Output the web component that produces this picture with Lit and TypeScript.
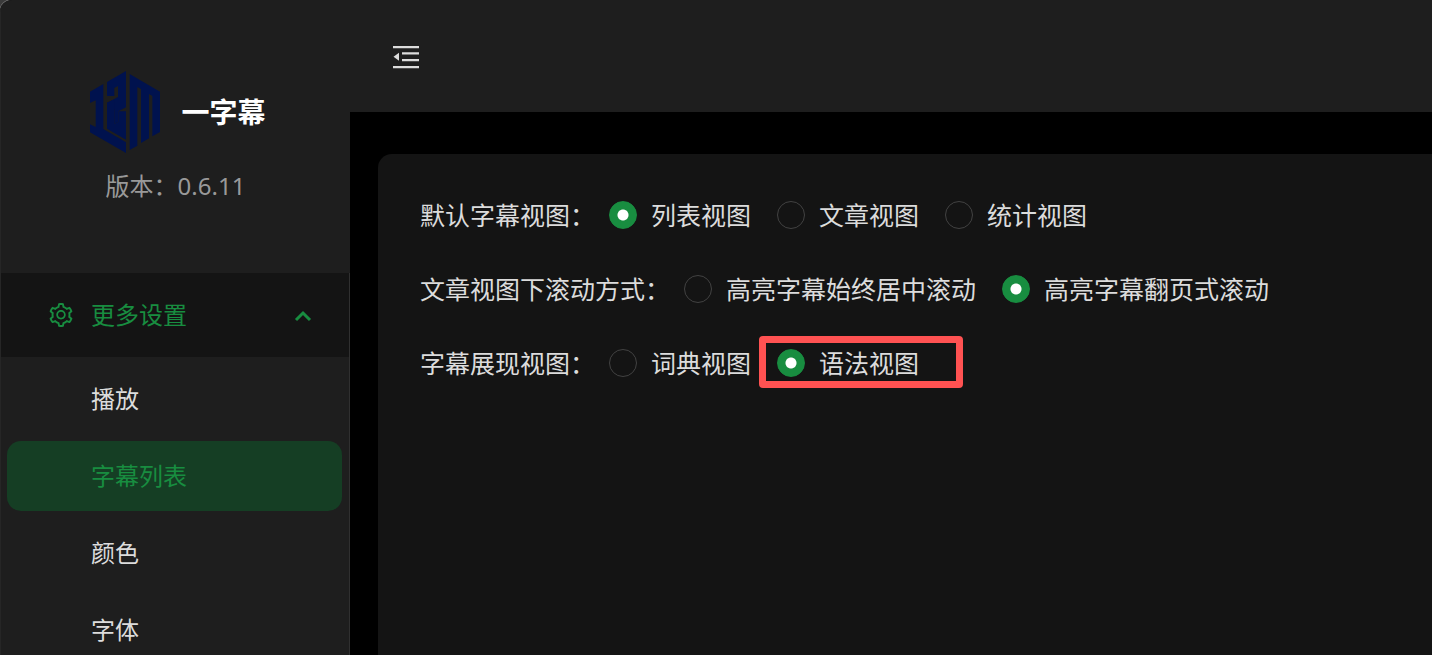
import { LitElement, html, css, svg } from "lit";
import { customElement, state } from "lit/decorators.js";

interface Group {
  name: string;
  label: string;
  options: string[];
}

const GROUPS: Group[] = [
  { name: "default-view", label: "默认字幕视图：", options: ["列表视图", "文章视图", "统计视图"] },
  { name: "scroll-mode", label: "文章视图下滚动方式：", options: ["高亮字幕始终居中滚动", "高亮字幕翻页式滚动"] },
  { name: "display-view", label: "字幕展现视图：", options: ["词典视图", "语法视图"] },
];

const MENU = ["播放", "字幕列表", "颜色", "字体"];
const HIGHLIGHTED = "语法视图";

const logo = svg`
  <path d="M0 62L40 39V174L108 214V246L0 184V160L17 168V88L0 96Z"/>
  <path d="M51 33L108 0V109L85 121V153L73 159V115L51 128V95L84 78V45L73 51V75H51Z"/>
  <path d="M51 95L73 86V159L85 153V121H108V206L51 173Z"/>
  <path d="M119 9L210 62V183L187 196V75L177 69V202L153 216V54L142 48V224L119 237Z"/>`;

@customElement("app-root")
export class AppRoot extends LitElement {
  static styles = css`
    :host {
      display: block;
      height: 100vh;
      overflow: hidden;
      background: #3a3a3a;
      color: #dcdcdc;
      font-family: "Noto Sans", "Noto Sans CJK SC", sans-serif;
      font-size: 25px;
      line-height: 38px;
    }
    * { box-sizing: border-box; }
    .window {
      display: grid;
      grid-template-columns: 350px 1fr;
      height: 100%;
      overflow: hidden;
      border-radius: 12px 0 0 0;
      background: #000;
      box-shadow: 0 0 0 1px #6a6a6a;
    }
    .sidebar { background: #1e1e1e; border-left: 1px solid #262626; overflow: hidden; }
    .brand {
      display: flex;
      flex-direction: column;
      align-items: center;
      height: 273px;
      padding-top: 71px;
      gap: 14px;
    }
    .brand-row { display: flex; align-items: center; gap: 21px; padding-left: 5px; }
    .logo { width: 70px; height: 82px; fill: #00124e; }
    .title { margin: 0; font-size: 28px; font-weight: 700; color: #fff; }
    .version { margin: 0; font-size: 24px; color: #999; }
    .menu { border-right: 1px solid #303030; min-height: 100%; }
    .menu-title {
      display: flex;
      align-items: center;
      width: 100%;
      height: 84px;
      padding: 0 34px 0 48px;
      gap: 18px;
      border: 0;
      background: #141414;
      color: #188d40;
      font: inherit;
      font-size: 24px;
      text-align: left;
    }
    .menu-title span { flex: 1; }
    .gear { width: 24px; height: 24px; }
    .arrow { width: 24px; height: 24px; }
    .items {
      display: flex;
      flex-direction: column;
      gap: 7px;
      margin: 0;
      padding: 7px 7px 7px 6px;
      list-style: none;
    }
    .item {
      display: flex;
      align-items: center;
      height: 70px;
      padding-left: 84px;
      border-radius: 14px;
      color: inherit;
      font-size: 24px;
      text-decoration: none;
    }
    .item.active { background: #153e24; color: #188d40; }
    .main { display: flex; flex-direction: column; min-width: 0; }
    .header {
      display: flex;
      align-items: center;
      height: 112px;
      padding: 0 42px;
      background: #1e1e1e;
    }
    .fold { display: flex; padding: 0; border: 0; background: none; color: #dcdcdc; }
    .fold svg { width: 28px; height: 28px; }
    .content { flex: 1; padding: 42px 0 0 28px; }
    .card {
      display: flex;
      flex-direction: column;
      gap: 36px;
      height: 100%;
      padding: 42px;
      border-radius: 14px 0 0 0;
      background: #141414;
    }
    .row {
      display: flex;
      align-items: center;
      height: 38px;
      margin: 0;
      gap: 14px;
      white-space: nowrap;
    }
    .options { display: flex; gap: 26px; }
    .option { position: relative; display: flex; align-items: center; gap: 14px; }
    .radio {
      appearance: none;
      flex: none;
      width: 28px;
      height: 28px;
      margin: 0;
      border: 1px solid #424242;
      border-radius: 50%;
    }
    .radio:checked {
      border-color: #188d40;
      background: radial-gradient(circle, #fff 5px, #188d40 6px);
    }
    .mark {
      position: absolute;
      inset: -8px -44px -6px -18px;
      border: 7px solid #ff5252;
      border-radius: 4px;
      pointer-events: none;
    }
  `;

  @state() private selected: Record<string, string> = {
    "default-view": "列表视图",
    "scroll-mode": "高亮字幕翻页式滚动",
    "display-view": "语法视图",
  };
  @state() private active = "字幕列表";

  private choose(name: string, value: string) {
    this.selected = { ...this.selected, [name]: value };
  }

  private renderGroup(g: Group) {
    return html`
      <div class="row" role="radiogroup" aria-labelledby=${g.name}>
        <span id=${g.name}>${g.label}</span>
        <div class="options">
          ${g.options.map(
            (o) => html`<label class="option">
              <input class="radio" type="radio" name=${g.name} .checked=${this.selected[g.name] === o}
                @change=${() => this.choose(g.name, o)} />
              <span>${o}</span>
              ${o === HIGHLIGHTED ? html`<i class="mark"></i>` : ""}
            </label>`
          )}
        </div>
      </div>`;
  }

  render() {
    return html`
      <div class="window">
        <aside class="sidebar">
          <div class="brand">
            <div class="brand-row">
              <svg class="logo" viewBox="0 0 210 246" aria-hidden="true">${logo}</svg>
              <h1 class="title">一字幕</h1>
            </div>
            <p class="version">版本：0.6.11</p>
          </div>
          <nav class="menu">
            <button class="menu-title" aria-expanded="true">
              <svg class="gear" viewBox="64 64 896 896" fill="currentColor" aria-hidden="true">
                <path d="M924.8 625.7l-65.5-56c3.1-19 4.7-38.4 4.7-57.8s-1.6-38.8-4.7-57.8l65.5-56a32.03 32.03 0 009.3-35.2l-.9-2.6a443.74 443.74 0 00-79.7-137.9l-1.8-2.1a32.12 32.12 0 00-35.1-9.5l-81.3 28.9c-30-24.6-63.5-44-99.7-57.6l-15.7-85a32.05 32.05 0 00-25.8-25.7l-2.7-.5c-52.1-9.4-106.9-9.4-159 0l-2.7.5a32.05 32.05 0 00-25.8 25.7l-15.8 85.4a351.86 351.86 0 00-99 57.4l-81.9-29.1a32 32 0 00-35.1 9.5l-1.8 2.1a446.02 446.02 0 00-79.7 137.9l-.9 2.6c-4.5 12.5-.8 26.5 9.3 35.2l66.3 56.6c-3.1 18.8-4.6 38-4.6 57.1 0 19.2 1.5 38.4 4.6 57.1L99 625.500a32.030 32.030 0 00-9.3 35.200l.9 2.600c18.100 50.400 44.900 96.900 79.700 137.900l1.800 2.100a32.120 32.120 0 0035.100 9.500l81.900-29.100c29.800 24.500 63.100 43.900 99 57.400l15.800 85.400a32.050 32.050 0 0025.800 25.700l2.700.5a449.400 449.400 0 00159 0l2.700-.5a32.050 32.050 0 0025.800-25.700l15.700-85a350 350 0 0099.700-57.600l81.300 28.900a32 32 0 0035.100-9.500l1.800-2.100c34.800-41.100 61.600-87.500 79.700-137.900l.9-2.600c4.500-12.300.8-26.300-9.300-35zM788.300 465.900c2.500 15.100 3.800 30.600 3.800 46.100s-1.300 31-3.800 46.100l-6.600 40.100 74.700 63.900a370.030 370.030 0 01-42.600 73.600L721 702.800l-31.400 25.800c-23.900 19.600-50.500 35-79.300 45.800l-38.100 14.300-17.900 97a377.500 377.500 0 01-85 0l-17.900-97.200-37.800-14.500c-28.500-10.800-55-26.200-78.700-45.700l-31.400-25.900-93.400 33.200c-17-22.900-31.200-47.600-42.600-73.600l75.500-64.500-6.500-40c-2.400-14.900-3.700-30.300-3.700-45.500 0-15.300 1.200-30.600 3.700-45.500l6.500-40-75.500-64.500c11.300-26.100 25.600-50.700 42.600-73.600l93.400 33.200 31.400-25.900c23.700-19.500 50.200-34.900 78.700-45.700l37.900-14.300 17.900-97.200c28.100-3.200 56.800-3.200 85 0l17.900 97 38.100 14.300c28.700 10.800 55.400 26.200 79.300 45.800l31.400 25.800 92.800-32.900c17 22.900 31.200 47.600 42.600 73.600L781.800 426l6.500 39.900zM512 326c-97.200 0-176 78.800-176 176s78.800 176 176 176 176-78.800 176-176-78.800-176-176-176zm79.200 255.200A111.600 111.600 0 01512 614c-29.900 0-58-11.700-79.200-32.800A111.600 111.600 0 01400 502c0-29.900 11.700-58 32.800-79.200C454 401.600 482.100 390 512 390c29.900 0 58 11.600 79.200 32.800A111.600 111.600 0 01624 502c0 29.900-11.700 58-32.800 79.200z"/>
              </svg>
              <span>更多设置</span>
              <svg class="arrow" viewBox="0 0 24 24" fill="none" stroke="currentColor" stroke-width="3" aria-hidden="true">
                <path d="M5 17L12 10L19 17"/>
              </svg>
            </button>
            <ul class="items">
              ${MENU.map(
                (m) => html`<li><a class="item ${m === this.active ? "active" : ""}" href="#"
                  @click=${(e: Event) => { e.preventDefault(); this.active = m; }}>${m}</a></li>`
              )}
            </ul>
          </nav>
        </aside>
        <div class="main">
          <header class="header">
            <button class="fold" aria-label="收起菜单">
              <svg viewBox="0 0 28 28" fill="currentColor" aria-hidden="true">
                <path d="M1 4h26v2.200H1zM10 10.300h17v2.200H10zM10 17h17v2.200H10zM1 24h26v2.200H1zM1.500 14.800L7 10.800V18.800Z"/>
              </svg>
            </button>
          </header>
          <main class="content">
            <section class="card">${GROUPS.map((g) => this.renderGroup(g))}</section>
          </main>
        </div>
      </div>`;
  }
}
